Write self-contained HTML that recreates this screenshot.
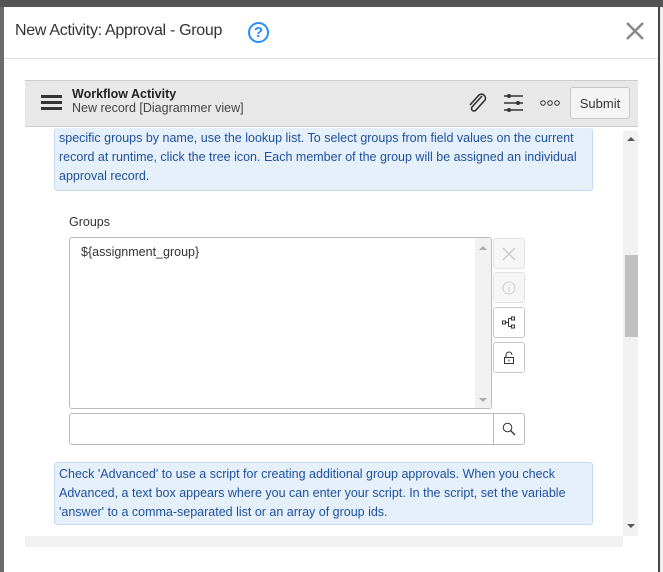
<!DOCTYPE html><html><head><style>
body{margin:0;width:663px;height:572px;overflow:hidden;background:#6b6b6b;font-family:"Liberation Sans",sans-serif;position:relative}
.a{position:absolute;box-sizing:border-box}
.info{background:#e5f0fb;border:1px solid #c5dbf2;border-radius:3px;color:#1f4f9e;font-size:12.5px;line-height:19px;padding:0 0 0 4px}
.btn{background:#fff;border:1px solid #c8c8c8;border-radius:3px;display:flex;align-items:center;justify-content:center}
.dis{background:#f6f6f6;border-color:#e2e2e2}
</style></head><body>
<div class="a" style="left:0;top:0;width:663px;height:7px;background:#555"></div>
<div class="a" style="left:658px;top:7px;width:5px;height:565px;background:#f0f0f0;border-left:2px solid #444"></div>
<div class="a" style="left:4px;top:7px;width:654px;height:565px;background:#fff"></div>
<div class="a" style="left:15px;top:22px;font-size:16px;letter-spacing:-0.3px;color:#333">New Activity: Approval - Group</div>
<div class="a" style="left:248px;top:22px;width:21px;height:21px;border:2px solid #278efc;border-radius:50%;color:#278efc;font-size:15px;font-weight:bold;text-align:center;line-height:18px">?</div>
<svg class="a" style="left:624px;top:20px" width="22" height="22"><path d="M3 3L19 19M19 3L3 19" stroke="#888" stroke-width="2.5"/></svg>
<div class="a" style="left:4px;top:58px;width:654px;height:1px;background:#e0e0e0"></div>
<div class="a" style="left:25px;top:80px;width:613px;height:47px;background:#e8e8e8;border-top:1px solid #ccc;border-bottom:1px solid #ccc"></div>
<div class="a" style="left:41px;top:95px;width:21px;height:3px;background:#333;box-shadow:0 6px 0 #333,0 12px 0 #333"></div>
<div class="a" style="left:72px;top:87px;font-size:12.5px;font-weight:bold;color:#222">Workflow Activity</div>
<div class="a" style="left:72px;top:101px;font-size:12.5px;color:#444">New record [Diagrammer view]</div>
<svg class="a" style="left:466px;top:92px" width="22" height="22"><path d="M16 4L6 15a2.5 2.5 0 0 0 4 3l9-10a4 4 0 0 0-6-5L4 13" fill="none" stroke="#333" stroke-width="1.6"/></svg>
<svg class="a" style="left:503px;top:92px" width="22" height="22"><path d="M1 4h19M1 11h19M1 18h19" stroke="#333" stroke-width="1.5"/><circle cx="6" cy="4" r="2" fill="#333"/><circle cx="15" cy="11" r="2" fill="#333"/><circle cx="6" cy="18" r="2" fill="#333"/></svg>
<svg class="a" style="left:540px;top:99px" width="22" height="8"><circle cx="3" cy="4" r="2.3" fill="none" stroke="#333"/><circle cx="10" cy="4" r="2.3" fill="none" stroke="#333"/><circle cx="17" cy="4" r="2.3" fill="none" stroke="#333"/></svg>
<div class="a btn" style="left:570px;top:87px;width:60px;height:32px;background:#f4f4f4;font-size:13px;color:#333">Submit</div>
<div class="a" style="left:623px;top:131px;width:15px;height:405px;background:#f1f1f1"></div>
<div class="a" style="left:625px;top:255px;width:13px;height:82px;background:#c1c1c1"></div>
<div class="a" style="left:627px;top:137px;border:4px solid transparent;border-bottom:4px solid #555;border-top:0"></div>
<div class="a" style="left:627px;top:524px;border:4px solid transparent;border-top:4px solid #555;border-bottom:0"></div>
<div class="a" style="left:25px;top:536px;width:598px;height:11px;background:#f1f1f1"></div>
<div class="a info" style="left:54px;top:128px;width:539px;height:63px;border-top:none;padding-top:1px">specific groups by name, use the lookup list. To select groups from field values on the current<br>record at runtime, click the tree icon. Each member of the group will be assigned an individual<br>approval record.</div>
<div class="a" style="left:69px;top:215px;font-size:12.5px;color:#333">Groups</div>
<div class="a" style="left:69px;top:237px;width:423px;height:172px;border:1px solid #bbb;border-radius:3px;background:#fff"></div>
<div class="a" style="left:475px;top:238px;width:16px;height:170px;background:#f1f1f1"></div>
<div class="a" style="left:479px;top:246px;border:4px solid transparent;border-bottom:4px solid #aaa;border-top:0"></div>
<div class="a" style="left:479px;top:398px;border:4px solid transparent;border-top:4px solid #aaa;border-bottom:0"></div>
<div class="a" style="left:81px;top:245px;font-size:12.5px;color:#333">${assignment_group}</div>
<div class="a btn dis" style="left:493px;top:238px;width:32px;height:31px"><svg width="14" height="14"><path d="M1 1L13 13M13 1L1 13" stroke="#ccc" stroke-width="1.5"/></svg></div>
<div class="a btn dis" style="left:493px;top:272px;width:32px;height:31px"><svg width="14" height="14"><circle cx="7" cy="7" r="6" fill="none" stroke="#ccc"/><path d="M7 6v5M7 3.5v1" stroke="#ccc"/></svg></div>
<div class="a btn" style="left:493px;top:307px;width:32px;height:31px"><svg width="14" height="14"><rect x="0.5" y="5" width="3" height="3" fill="none" stroke="#333"/><rect x="9.5" y="1" width="3" height="3" fill="none" stroke="#333"/><rect x="9.5" y="9" width="3" height="3" fill="none" stroke="#333"/><path d="M3.5 6.5H6.5M6.5 2.5V10.5M6.5 2.5H9.5M6.5 10.5H9.5" stroke="#333" fill="none"/></svg></div>
<div class="a btn" style="left:493px;top:342px;width:32px;height:31px"><svg width="14" height="14"><path d="M4 6V4a3 3 0 0 1 6 0" fill="none" stroke="#333"/><rect x="2.5" y="6.5" width="9" height="6" fill="none" stroke="#333"/><path d="M7 8.5v2" stroke="#333"/></svg></div>
<div class="a" style="left:69px;top:413px;width:456px;height:32px;border:1px solid #bbb;border-radius:3px;background:#fff"></div>
<div class="a" style="left:493px;top:413px;width:1px;height:32px;background:#bbb"></div>
<svg class="a" style="left:502px;top:422px" width="14" height="14"><circle cx="5.5" cy="5.5" r="4.3" fill="none" stroke="#333"/><path d="M8.5 8.5L13 13" stroke="#333" stroke-width="1.3"/></svg>
<div class="a info" style="left:54px;top:462px;width:539px;height:63px;padding-top:2px">Check 'Advanced' to use a script for creating additional group approvals. When you check<br>Advanced, a text box appears where you can enter your script. In the script, set the variable<br>'answer' to a comma-separated list or an array of group ids.</div>
</body></html>
